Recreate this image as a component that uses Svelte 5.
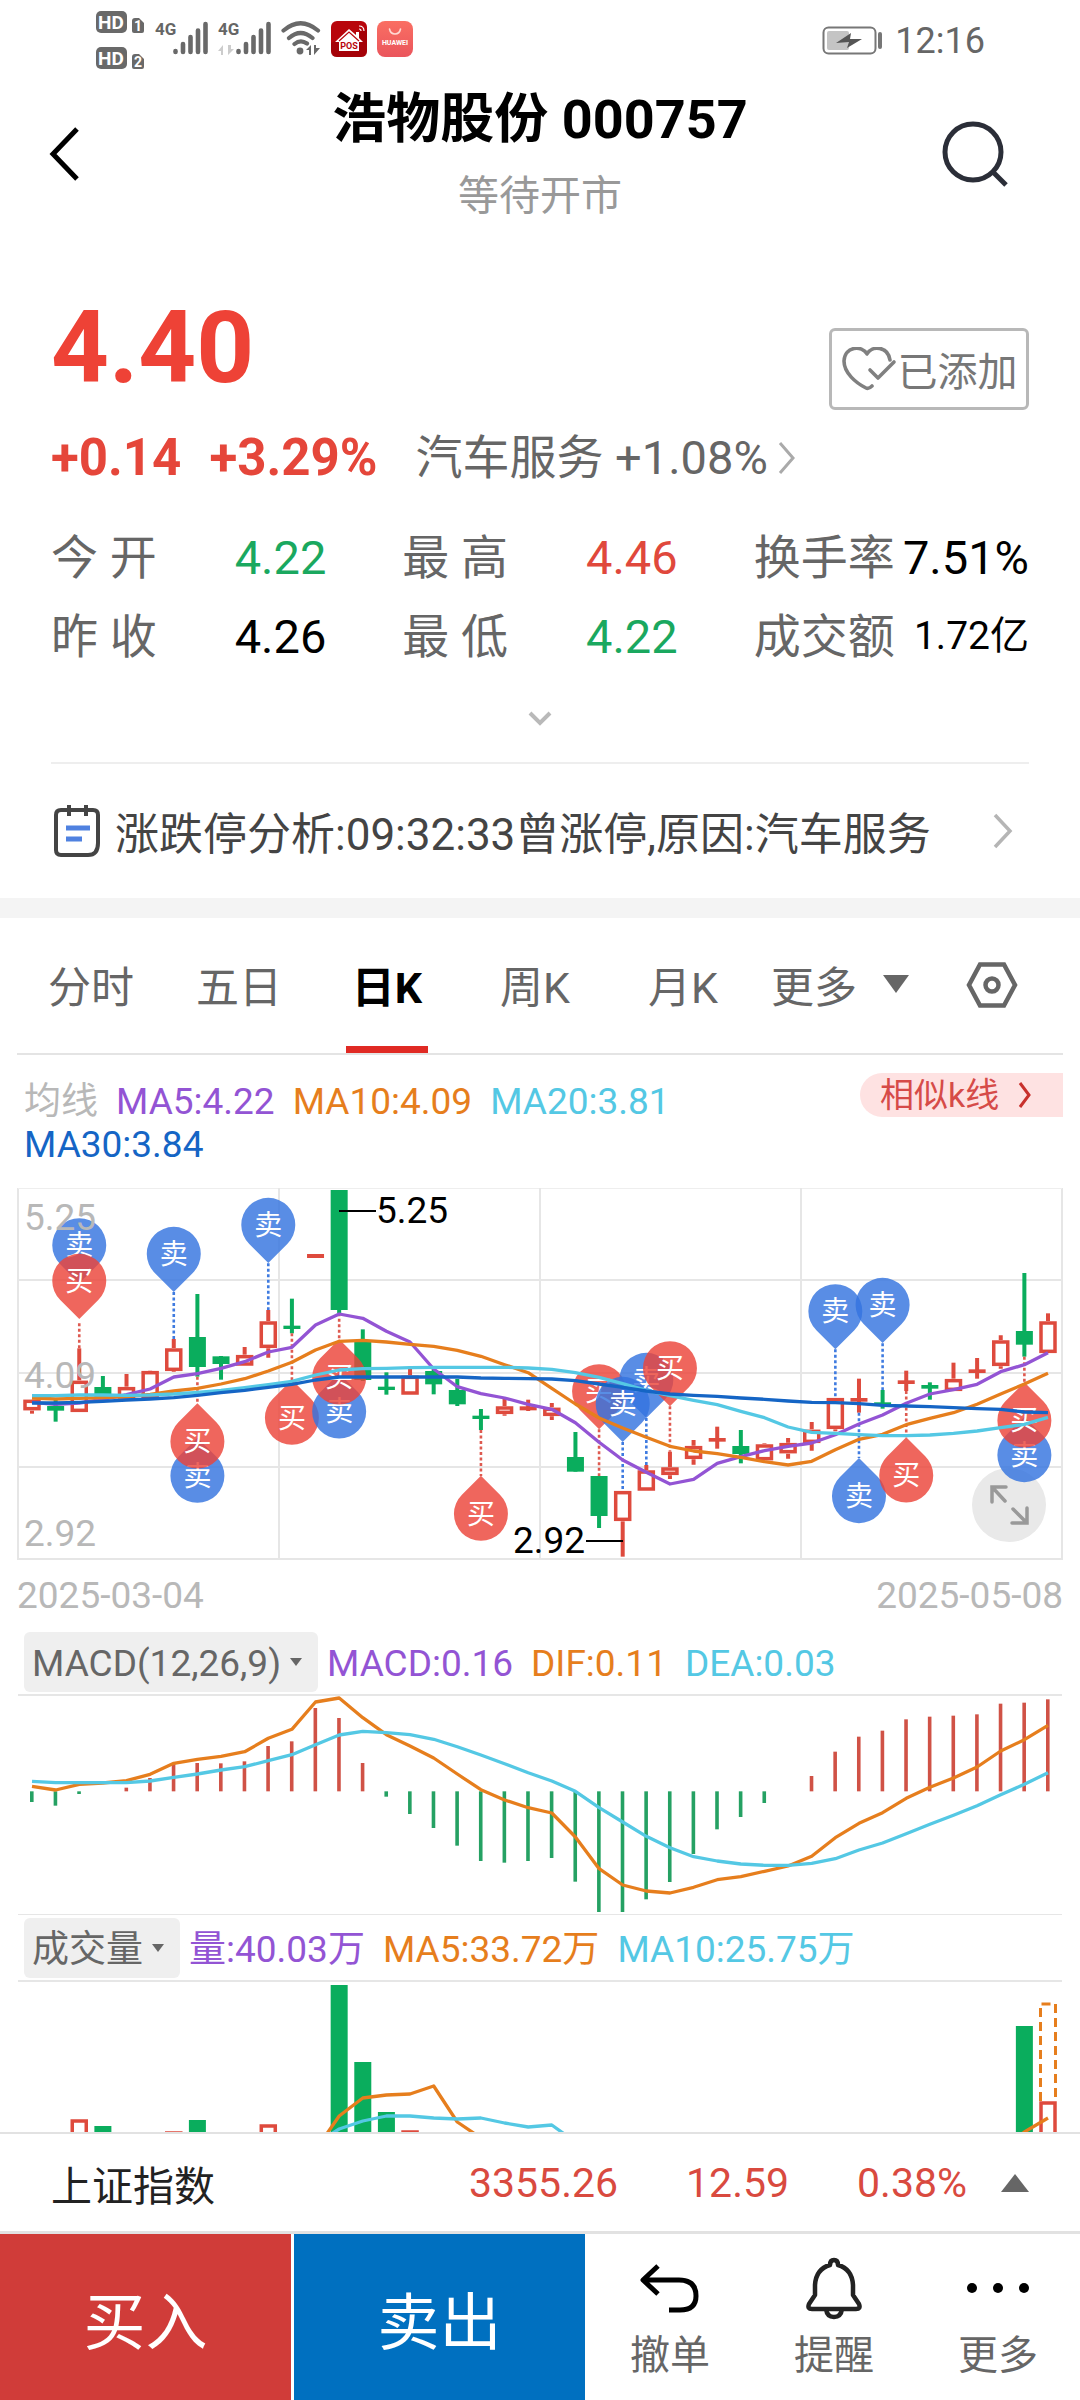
<script>
  const X0 = 32;
  const STEP = 1016 / 43;
  const x = (i) => X0 + i * STEP;

  // Chart values are stored in thirds of a pixel, measured from a per-panel origin.
  const ky = (v) => v / 3 - 18;
  const my = (v) => v / 3 - 85;
  const path = (values, y, start = 0) =>
    values.map((v, i) => `${x(i + start).toFixed(1)},${y(v).toFixed(1)}`).join(' ');

  // [rising, high, body top, body bottom, low]
  const candles = [
    [1, 688, 688, 722, 731], [0, 685, 708, 722, 755], [1, 535, 631, 727, 727], [0, 618, 651, 684, 695],
    [1, 612, 650, 687, 687], [1, 603, 602, 687, 690], [1, 507, 534, 604, 606], [0, 372, 501, 591, 620],
    [0, 558, 559, 582, 629], [1, 531, 554, 588, 588], [1, 420, 453, 535, 563], [0, 386, 467, 477, 490],
    [1, 252, 252, 264, 264], [0, 60, 60, 420, 430], [0, 478, 516, 630, 633], [0, 607, 650, 660, 674],
    [1, 590, 616, 675, 675], [0, 597, 603, 643, 673], [0, 627, 660, 703, 708], [0, 717, 737, 747, 780],
    [1, 687, 708, 733, 737], [1, 689, 709, 721, 723], [1, 699, 712, 739, 750], [0, 786, 861, 905, 905],
    [0, 918, 918, 1038, 1074], [1, 962, 962, 1054, 1160], [1, 885, 900, 963, 963], [1, 845, 891, 916, 927],
    [1, 810, 827, 868, 884], [1, 770, 804, 815, 836], [0, 780, 828, 852, 880], [1, 820, 822, 872, 872],
    [1, 804, 818, 851, 866], [1, 756, 778, 820, 842], [1, 683, 683, 778, 784], [1, 626, 684, 695, 728],
    [0, 660, 697, 707, 716], [1, 602, 631, 642, 663], [0, 637, 645, 656, 689], [1, 578, 626, 664, 664],
    [1, 564, 598, 609, 626], [1, 496, 510, 589, 596], [0, 309, 483, 524, 560], [1, 430, 453, 550, 550]
  ];

  const ma5 = [697, 703, 699, 688, 674, 657, 621, 611, 595, 575, 546, 532, 465, 432, 445, 484, 516, 597, 650, 671, 684, 703, 718, 758, 817, 870, 907, 942, 928, 880, 860, 842, 829, 819, 794, 762, 735, 700, 672, 659, 643, 605, 584, 548];
  const ma10 = [684, 687, 685, 683, 680, 673, 663, 655, 642, 626, 603, 577, 540, 514, 511, 516, 523, 529, 541, 559, 584, 608, 655, 702, 744, 774, 802, 829, 843, 851, 862, 875, 885, 874, 839, 808, 793, 764, 745, 728, 703, 672, 642, 610];
  const ma20 = [677, 677, 675, 675, 676, 675, 672, 667, 661, 653, 644, 634, 615, 600, 596, 595, 593, 592, 592, 592, 592, 594, 598, 608, 622, 641, 661, 677, 691, 704, 724, 743, 771, 787, 790, 794, 797, 797, 795, 790, 783, 773, 763, 742];
  const ma30 = [699, 699, 697, 694, 690, 687, 683, 676, 668, 661, 652, 643, 630, 621, 621, 621, 621, 621, 621, 624, 625, 626, 627, 632, 642, 652, 663, 672, 676, 679, 684, 688, 693, 697, 698, 701, 706, 708, 710, 713, 716, 718, 726, 728];

  // [candle, side, points up, centre, dotted line from, to]
  const pins = [
    [2, 'sell', 0, 226, 0, 0], [2, 'buy', 0, 333, 460, 535], [6, 'sell', 0, 252, 366, 507],
    [10, 'sell', 0, 165, 280, 420], [7, 'sell', 1, 917, 0, 0], [7, 'buy', 1, 814, 620, 700],
    [11, 'buy', 1, 743, 490, 632], [13, 'sell', 1, 724, 0, 0], [13, 'buy', 1, 622, 430, 510],
    [19, 'buy', 1, 1031, 780, 918], [24, 'buy', 0, 664, 778, 918], [26, 'sell', 0, 630, 744, 885],
    [25, 'sell', 0, 702, 816, 962], [27, 'buy', 0, 595, 709, 845], [34, 'sell', 0, 424, 538, 683],
    [36, 'sell', 0, 405, 520, 660], [35, 'sell', 1, 978, 728, 864], [37, 'buy', 1, 916, 663, 802],
    [42, 'sell', 1, 855, 0, 0], [42, 'buy', 1, 751, 560, 637]
  ];

  const macd = [573, 584, 549, 541, 530, 501, 457, 456, 457, 451, 405, 391, 291, 321, 456, 557, 609, 651, 704, 750, 755, 750, 741, 812, 903, 903, 865, 813, 729, 655, 618, 576, 541, 495, 422, 377, 359, 325, 317, 314, 310, 278, 275, 265];
  const dif = [526, 537, 520, 516, 509, 490, 457, 445, 436, 422, 382, 355, 273, 261, 320, 371, 405, 441, 489, 536, 567, 590, 606, 678, 773, 822, 840, 846, 829, 806, 797, 781, 765, 736, 680, 637, 605, 562, 529, 501, 468, 420, 386, 343];
  const dea = [511, 515, 515, 515, 515, 510, 499, 489, 477, 467, 449, 431, 401, 372, 361, 365, 371, 385, 407, 432, 458, 485, 510, 541, 590, 633, 676, 710, 737, 750, 759, 763, 763, 757, 743, 717, 696, 668, 640, 613, 584, 551, 520, 485];
  const ZERO = 541;

  // [candle, rising, top]
  const volumes = [[2, 1, 137], [3, 0, 144], [6, 1, 149], [7, 0, 138], [10, 1, 142], [13, 0, 3], [14, 0, 80], [15, 0, 130], [16, 1, 148], [42, 0, 44], [43, 1, 119]];
  const same = (v) => v;
  const vol5 = [168, 134, 116, 113, 112, 104, 140, 156];
  const vol10 = [162, 147, 139, 134, 134, 136, 137, 136, 141, 145, 143, 160];

  const stats = [
    ['今 开', '4.22', 'down'], ['最 高', '4.46', 'up'], ['换手率', '7.51%', ''],
    ['昨 收', '4.26', ''], ['最 低', '4.22', 'down'], ['成交额', '1.72亿', 'small']
  ];
  const tabs = ['分时', '五日', '日K', '周K', '月K'];
  let active = $state('日K');
</script>

{#snippet signal()}
  <svg width="35" height="34" viewBox="0 0 35 34" aria-hidden="true">
    <g stroke="#696969" stroke-width="4.6" stroke-linecap="round">
      <path d="M2.5 30v1M10 23v8M17.500 16v15M25 9.500v21.500M32.500 3v28" />
    </g>
  </svg>
{/snippet}

<div class="page">
  <div class="status">
    <div class="left">
      <svg class="hd" width="49" height="60" viewBox="0 0 49 60" aria-hidden="true">
        <rect x="0" y="0" width="31" height="22" rx="5" fill="#696969" />
        <text x="15" y="18" class="badge-lg">HD</text>
        <path d="M36 10q0-3 3-3h4l5 5v8q0 2-2 2h-8q-2 0-2-2z" fill="#696969" />
        <text x="42" y="20" class="badge-sm">1</text>
        <rect x="0" y="36" width="31" height="22" rx="5" fill="#696969" />
        <text x="15" y="54" class="badge-lg">HD</text>
        <path d="M36 46q0-3 3-3h4l5 5v8q0 2-2 2h-8q-2 0-2-2z" fill="#696969" />
        <text x="42" y="56" class="badge-sm">2</text>
      </svg>
      <div class="net"><span>4G</span>{@render signal()}</div>
      <div class="net">
        <span>4G</span>
        <svg class="updown" width="16" height="10" viewBox="0 0 16 10" aria-hidden="true"><path d="M0 6l5-6v10h-2V6zM10 0v10l6-6h-3V0z" fill="#ccc" /></svg>
        {@render signal()}
      </div>
      <svg class="wifi" width="40" height="34" viewBox="0 0 40 34" aria-hidden="true">
        <g fill="none" stroke="#696969" stroke-width="4.200" stroke-linecap="round">
          <path d="M2.500 9.500Q19.500-5 37 9.500M8 17q11.500-10 23.500 0M13.500 23q6-5 12.500-.5" />
        </g>
        <circle cx="19" cy="30" r="3.400" fill="#696969" />
        <path d="M25 29l5-5v10h-2v-5zM33 24v10l6-7h-4v-3z" fill="#696969" />
      </svg>
      <svg width="36" height="36" viewBox="0 0 36 36" aria-hidden="true">
        <rect width="36" height="36" rx="6" fill="#b8060c" />
        <path d="M0 22L36 8v22q0 6-6 6H6q-6 0-6-6z" fill="#980006" opacity=".6" />
        <path d="M18 8L4 21h4v9h20v-9h4l-4-4v-6h-3v3z" fill="#fff" />
        <path d="M8 20L18 11l10 9" fill="none" stroke="#b8060c" stroke-width="1.200" />
        <text x="18" y="28" class="pos">POS</text>
        <path d="M28 8q2 0 2 2M28 5q5 0 5 5" fill="none" stroke="#fff" stroke-width="1.200" />
      </svg>
      <svg width="36" height="36" viewBox="0 0 36 36" aria-hidden="true">
        <defs><linearGradient id="hw" x1="0" y1="0" x2="0" y2="1"><stop offset="0" stop-color="#fa6f63" /><stop offset="1" stop-color="#ea555c" /></linearGradient></defs>
        <rect width="36" height="36" rx="8" fill="url(#hw)" />
        <path d="M12.500 8q1 5 5.500 5t5.500-5" fill="none" stroke="#ffd9d4" stroke-width="1.600" stroke-linecap="round" />
        <text x="18" y="24" class="hw">HUAWEI</text>
      </svg>
    </div>
    <div class="right">
      <svg width="61" height="30" viewBox="0 0 61 30" aria-hidden="true">
        <rect x="1.500" y="1.500" width="52" height="26" rx="5" fill="none" stroke="#777" stroke-width="2" />
        <rect x="5" y="5" width="22" height="19" rx="2" fill="#c4c4c4" />
        <path d="M14 17l15-10-1 6h12L25 22l2-6z" fill="#555" />
        <rect x="56" y="6" width="4" height="17" rx="2" fill="#777" />
      </svg>
      <span>12:16</span>
    </div>
  </div>

  <header>
    <button class="icon" aria-label="返回">
      <svg width="32" height="58" viewBox="0 0 32 58"><path d="M29 4L5 29l24 25" fill="none" stroke="#000" stroke-width="5" /></svg>
    </button>
    <div class="heading">
      <h1>浩物股份 000757</h1>
      <p>等待开市</p>
    </div>
    <button class="icon" aria-label="搜索">
      <svg width="68" height="68" viewBox="0 0 68 68"><g fill="none" stroke="#2b2e38" stroke-width="5"><circle cx="31" cy="32" r="28" /><path d="M50 51l14 14" /></g></svg>
    </button>
  </header>

  <section class="quote">
    <div class="top">
      <strong class="price">4.40</strong>
      <button class="added">
        <svg width="56" height="44" viewBox="0 0 56 44" aria-hidden="true">
          <g fill="none" stroke="#808080" stroke-width="3.600" stroke-linecap="round" stroke-linejoin="round">
            <path d="M49 13C47-1 31-2 26 7 21-2 4-1 3 14c0 12 12 22 22 27 2 1 4 0 6-2" />
            <path d="M29 23l8 8 16-16" />
          </g>
        </svg>
        <span>已添加</span>
      </button>
    </div>
    <div class="change">
      <b>+0.14</b>
      <b>+3.29%</b>
      <a href="#sector">汽车服务 +1.08%
        <svg width="18" height="34" viewBox="0 0 18 34" aria-hidden="true"><path d="M2 2l13 15L2 32" fill="none" stroke="#aaa" stroke-width="3" /></svg>
      </a>
    </div>
    <dl class="stats">
      {#each stats as [label, value, tone]}
        <div><dt>{label}</dt><dd class={tone}>{value}</dd></div>
      {/each}
    </dl>
    <button class="expand" aria-label="展开">
      <svg width="24" height="18" viewBox="0 0 24 18"><path d="M2 3l10 10L22 3" fill="none" stroke="#b9b9b9" stroke-width="4" /></svg>
    </button>
    <a class="notice" href="#analysis">
      <svg width="50" height="54" viewBox="0 0 50 54" aria-hidden="true">
        <path d="M10 6h32q5 0 5 5v28q0 12-10 12H10q-5 0-5-5V11q0-5 5-5z" fill="none" stroke="#444" stroke-width="4" />
        <path d="M18 1v11M35 1v11" stroke="#444" stroke-width="4" />
        <path d="M15 24h24M15 35h16" stroke="#4f81e0" stroke-width="5" />
      </svg>
      <span>涨跌停分析:09:32:33曾涨停,原因:汽车服务</span>
      <svg width="20" height="36" viewBox="0 0 20 36" aria-hidden="true"><path d="M2 2l15 16L2 34" fill="none" stroke="#b5b5b5" stroke-width="3.500" /></svg>
    </a>
  </section>

  <nav class="tabs">
    {#each tabs as tab}
      <button class:active={active === tab} onclick={() => (active = tab)}>{tab}</button>
    {/each}
    <button class="more">更多<svg width="26" height="18" viewBox="0 0 26 18" aria-hidden="true"><path d="M0 0h26L13 18z" fill="#666" /></svg></button>
    <button class="gear" aria-label="设置">
      <svg width="52" height="46" viewBox="0 0 52 46"><g fill="none" stroke="#666" stroke-width="4.500"><path d="M14 2.500h24L49 23 38 43.500H14L3 23z" /><circle cx="26" cy="23" r="6.500" /></g></svg>
    </button>
  </nav>

  <section class="averages">
    <div class="legend">
      <span class="muted">均线</span><span class="purple">MA5:4.22</span><span class="orange">MA10:4.09</span><span class="cyan">MA20:3.81</span><span class="blue">MA30:3.84</span>
    </div>
    <button class="similar">相似k线<svg width="14" height="26" viewBox="0 0 14 26" aria-hidden="true"><path d="M2 1l9 12-9 12" fill="none" stroke="#c8302c" stroke-width="3" /></svg></button>
  </section>

  <div class="kline">
    <button class="zoom" aria-label="全屏">
      <svg width="74" height="74" viewBox="0 0 74 74"><g fill="none" stroke="#999" stroke-width="3.500" stroke-linecap="round"><path d="M20 34V19h14M20 19l13 14M41 41l14 14M40 55h15V40" /></g></svg>
    </button>
    <svg class="plot" viewBox="0 0 1080 372" role="img" aria-label="日K线图">
      <g fill="none" stroke="#e6e6e6" stroke-width="2">
        <path d="M18 0V371H1062V0" /><path d="M18 0H1062" stroke="#eee" />
        <path d="M18 92H1062M18 185H1062M18 279H1062M279 0V371M540 0V371M801 0V371" />
      </g>
      {#each candles as [up, hi, top, bot, lo], i}
        {@const hollow = up && bot - top > 16}
        <g fill={up ? '#de4a3d' : '#0aad5d'}>
          {#if hollow}
            <path d="M{x(i)} {ky(hi)}V{ky(top)}M{x(i)} {ky(bot)}V{ky(lo)}" stroke="#de4a3d" stroke-width="4" />
            <rect x={x(i) - 7} y={ky(top) + 2} width="14" height={(bot - top) / 3 - 4} fill="#fff" stroke="#de4a3d" stroke-width="3.500" />
          {:else}
            <rect x={x(i) - 2} y={ky(hi)} width="4" height={(lo - hi) / 3} />
            <rect x={x(i) - 8.5} y={ky(top)} width="17" height={(bot - top) / 3} />
          {/if}
        </g>
      {/each}
      {#each pins as [i, side, up, c, from, to]}
        {#if to}
          <path d="M{x(i)} {ky(from)}V{ky(to)}" stroke={side === 'buy' ? '#de5a50' : '#3f7be0'} stroke-width="2.600" stroke-dasharray="3 2.500" />
        {/if}
        <path
          d={up
            ? `M${x(i)} ${ky(c) - 38}l-19 19a27 27 0 1 0 38 0z`
            : `M${x(i)} ${ky(c) + 38}l-19 -19a27 27 0 1 1 38 0z`}
          fill={side === 'buy' ? '#eb4439' : '#3474df'} opacity=".82" />
        <text class="pin" x={x(i)} y={ky(c) + 10}>{side === 'buy' ? '买' : '卖'}</text>
      {/each}
      <g fill="none" stroke-width="3.300" stroke-linejoin="round">
        <polyline points={path(ma5, ky)} stroke="#9354d4" />
        <polyline points={path(ma10, ky)} stroke="#e67e1d" />
        <polyline points={path(ma20, ky)} stroke="#54c8e4" />
        <polyline points={path(ma30, ky)} stroke="#1565c5" />
      </g>
      <path d="M339 23h37M586 353h37" stroke="#000" stroke-width="2" />
      <text x="376" y="35" fill="#000">5.25</text>
      <text x="513" y="365" fill="#000">2.92</text>
      <g fill="#b8b8b8">
        <text x="24" y="42">5.25</text><text x="24" y="200">4.09</text><text x="24" y="358">2.92</text>
      </g>
    </svg>
  </div>
  <div class="dates"><span>2025-03-04</span><span>2025-05-08</span></div>

  <section class="panel">
    <div class="bar">
      <button class="pick">MACD(12,26,9)<svg width="12" height="8" viewBox="0 0 12 8" aria-hidden="true"><path d="M0 0h12L6 8z" fill="#666" /></svg></button>
      <span class="purple">MACD:0.16</span><span class="orange">DIF:0.11</span><span class="cyan">DEA:0.03</span>
    </div>
    <svg class="plot" viewBox="0 0 1080 218" role="img" aria-label="MACD">
      {#each macd as v, i}
        <rect x={x(i) - 2} y={my(Math.min(v, ZERO))} width="3.600" height={Math.abs(v - ZERO) / 3} fill={v < ZERO ? '#d05246' : '#25a163'} />
      {/each}
      <g fill="none" stroke-width="3.300" stroke-linejoin="round">
        <polyline points={path(dif, my)} stroke="#e67e1d" />
        <polyline points={path(dea, my)} stroke="#54c8e4" />
      </g>
    </svg>
  </section>

  <section class="panel volume">
    <div class="bar">
      <button class="pick">成交量<svg width="12" height="8" viewBox="0 0 12 8" aria-hidden="true"><path d="M0 0h12L6 8z" fill="#666" /></svg></button>
      <span class="purple">量:40.03万</span><span class="orange">MA5:33.72万</span><span class="cyan">MA10:25.75万</span>
    </div>
    <svg class="plot" viewBox="0 0 1080 150" role="img" aria-label="成交量">
      <path d="M1040.500 119V22H1055.500V119" fill="none" stroke="#e67e1d" stroke-width="3" stroke-dasharray="9 5" />
      {#each volumes as [i, up, top]}
        {#if up}
          <rect x={x(i) - 7} y={top + 2} width="14" height="60" fill="#fff" stroke="#de4a3d" stroke-width="3.500" />
        {:else}
          <rect x={x(i) - 8.5} y={top} width="17" height={150 - top} fill="#0aad5d" />
        {/if}
      {/each}
      <g fill="none" stroke-width="3.300" stroke-linejoin="round">
        <polyline points={path(vol5, same, 12)} stroke="#e67e1d" />
        <polyline points={path([168, 150, 136], same, 41)} stroke="#e67e1d" />
        <polyline points={path(vol10, same, 12)} stroke="#54c8e4" />
      </g>
    </svg>
  </section>

  <div class="index">
    <span class="name">上证指数</span>
    <span>3355.26</span><span>12.59</span><span>0.38%</span>
    <svg width="28" height="18" viewBox="0 0 28 18" aria-hidden="true"><path d="M14 0l14 18H0z" fill="#666" /></svg>
  </div>

  <footer>
    <button class="trade buy">买入</button>
    <button class="trade sell">卖出</button>
    <div class="actions">
      <button>
        <svg width="64" height="64" viewBox="0 0 64 64" aria-hidden="true"><path d="M20 10L5 24l15 14M5 24h36q17 0 17 16 0 14-16 14H31" fill="none" stroke="#000" stroke-width="5" stroke-linejoin="round" /></svg>
        撤单
      </button>
      <button>
        <svg width="64" height="64" viewBox="0 0 64 64" aria-hidden="true"><g fill="none" stroke="#222" stroke-width="4.500" stroke-linejoin="round"><path d="M28 9q0-5 4-5t4 5q14 4 15 20v10l6 9q2 5-3 5H10q-5 0-3-5l6-9V29Q14 13 28 9z" /><path d="M24 53q1 8 8 8t8-8" /></g></svg>
        提醒
      </button>
      <button>
        <svg width="64" height="64" viewBox="0 0 64 64" aria-hidden="true"><circle cx="6" cy="32" r="5" /><circle cx="32" cy="32" r="5" /><circle cx="58" cy="32" r="5" /></svg>
        更多
      </button>
    </div>
  </footer>
</div>

<style>
  :global(body) { margin: 0; background: #fff; }
  .page { font-family: Roboto, 'Noto Sans CJK SC', sans-serif; color: #000; background: #fff; display: flex; flex-direction: column; }
  button { font: inherit; color: inherit; background: none; border: 0; padding: 0; margin: 0; cursor: pointer; }
  a { color: inherit; text-decoration: none; }
  svg { display: block; flex: none; }
  h1, p, dl, dd, dt { margin: 0; }
  svg text { font-size: 37px; }

  .status { display: flex; justify-content: space-between; padding: 11px 95px 0 96px; height: 69px; color: #666; }
  .left { display: flex; gap: 10px; }
  .left > :not(.hd) { margin-top: 10px; }
  .net { display: flex; position: relative; height: 36px; width: 53px; justify-content: flex-end; }
  .net span { position: absolute; left: 0; top: 0; font-size: 17px; line-height: 17px; font-weight: 700; }
  .updown { position: absolute; left: 0; bottom: 2px; }
  .right { display: flex; gap: 12px; align-items: center; height: 60px; font-size: 36px; line-height: 36px; }
  .status .badge-lg { fill: #fff; font-size: 19px; font-weight: 700; text-anchor: middle; }
  .status .badge-sm { fill: #fff; font-size: 14px; font-weight: 700; text-anchor: middle; }
  .status .pos { fill: #b8060c; font-size: 9px; font-weight: 700; text-anchor: middle; }
  .status .hw { fill: #fff; font-size: 7px; font-weight: 700; text-anchor: middle; }

  header { display: flex; justify-content: space-between; align-items: flex-start; padding: 0 70px 0 48px; }
  header .icon { width: 70px; height: 148px; display: flex; align-items: center; }
  header .icon:last-child { justify-content: flex-end; }
  .heading { text-align: center; flex: 1; padding: 2px 0 0 22px; }
  h1 { font-size: 54px; line-height: 76px; font-weight: 700; }
  .heading p { font-size: 41px; line-height: 76px; color: #999; }

  .quote { padding: 64px 51px 0; }
  .top { display: flex; justify-content: space-between; align-items: flex-start; min-height: 130px; }
  .price { font-size: 101px; line-height: 100px; color: #ee4236; }
  .added { display: flex; align-items: center; justify-content: center; gap: 1px; width: 200px; height: 82px; margin-top: 30px; box-sizing: border-box; border: 3px solid #b8b8b8; border-radius: 6px; font-size: 40px; color: #777; }
  .change { display: flex; align-items: center; font-size: 47px; line-height: 60px; color: #666; }
  .change b { font-size: 51px; color: #e5463a; margin-right: 28px; }
  .change b + b { margin-right: 38px; }
  .change a { display: flex; align-items: center; gap: 10px; }
  .stats { display: grid; grid-template-columns: repeat(3, 1fr); column-gap: 76px; margin-top: 30px; font-size: 47px; line-height: 79px; }
  .stats div { display: flex; justify-content: space-between; white-space: pre; }
  dt { color: #666; }
  .up { color: #e0483c; }
  .down { color: #1aa85f; }
  .small { font-size: 39px; }
  .expand { display: flex; width: 100%; height: 88px; align-items: center; justify-content: center; border-bottom: 2px solid #eee; }
  .notice { display: flex; align-items: center; height: 134px; font-size: 44px; color: #444; padding-right: 16px; }
  .notice span { flex: 1; padding-left: 14px; }

  .tabs { display: grid; grid-template-columns: repeat(5, 148fr) 170fr 130fr 6fr; height: 137px; padding: 0 17px; border-top: 20px solid #f4f4f4; font-size: 43px; color: #666; }
  .tabs::after { content: ''; height: 2px; background: #e4e4e4; grid-column: 1 / -1; }
  .tabs button { height: 135px; display: flex; align-items: center; justify-content: center; box-sizing: border-box; padding-bottom: 4px; }
  .tabs .active { color: #000; font-weight: 700; background: linear-gradient(#e02a24, #e02a24) center bottom / 82px 7px no-repeat; }
  .tabs .more { gap: 26px; justify-content: flex-start; padding-left: 14px; }
  .tabs .gear { padding-bottom: 2px; }

  .averages { display: flex; justify-content: space-between; align-items: flex-start; padding: 25px 17px 22px 24px; }
  .legend { display: flex; flex-wrap: wrap; column-gap: 18px; max-width: 760px; font-size: 37px; line-height: 43px; }
  .similar { display: flex; align-items: center; justify-content: space-between; box-sizing: border-box; width: 203px; height: 44px; margin-top: -7px; padding: 0 31px 0 20px; border-radius: 22px 0 0 22px; background: #fee2e2; color: #d64b48; font-size: 34px; line-height: 44px; }
  .muted { color: #b8b8b8; }
  .purple { color: #9354d4; }
  .orange { color: #e67e1d; }
  .cyan { color: #54c8e4; }
  .blue { color: #1565c5; }

  .plot { width: 100%; height: auto; }
  .kline { position: relative; }
  .kline .plot { position: relative; pointer-events: none; }
  .zoom { position: absolute; right: 34px; bottom: 18px; width: 74px; height: 74px; border-radius: 50%; background: #e9e9e9; }
  .kline .pin { fill: #fff; font-size: 28px; text-anchor: middle; }
  .dates { display: flex; justify-content: space-between; padding: 0 17px; font-size: 37px; line-height: 72px; color: #b8b8b8; }

  .bar { display: flex; align-items: flex-start; gap: 18px; margin: 0 18px; padding-left: 6px; height: 62px; border-bottom: 2px solid #e6e6e6; font-size: 37px; line-height: 64px; }
  .pick { display: flex; align-items: center; gap: 9px; height: 60px; box-sizing: border-box; padding: 4px 16px 0 8px; margin-right: -9px; border-radius: 6px; background: #efefef; color: #666; }
  .pick svg { margin-bottom: 4px; }
  .volume .bar { border-top: 1px solid #e6e6e6; padding-top: 3px; }

  .index { display: flex; align-items: center; height: 97px; padding: 0 51px; border-top: 2px solid #e2e2e2; border-bottom: 3px solid #e2e2e2; font-size: 41px; color: #d94a3f; }
  .index span + span { margin-right: 68px; }
  .index span:nth-of-type(4) { margin-right: 34px; }
  .index .name { flex: 1; color: #222; }

  footer { display: grid; grid-template-columns: 291fr 291fr 492fr; column-gap: 3px; height: 166px; }
  .trade { color: #fff; font-size: 62px; padding-top: 2px; }
  .buy { background: #d03c39; }
  .sell { background: #0070c0; }
  .actions { display: grid; grid-template-columns: repeat(3, 1fr); color: #666; font-size: 40px; line-height: 56px; }
  .actions button { display: flex; flex-direction: column; align-items: center; gap: 8px; padding-top: 22px; }
</style>
